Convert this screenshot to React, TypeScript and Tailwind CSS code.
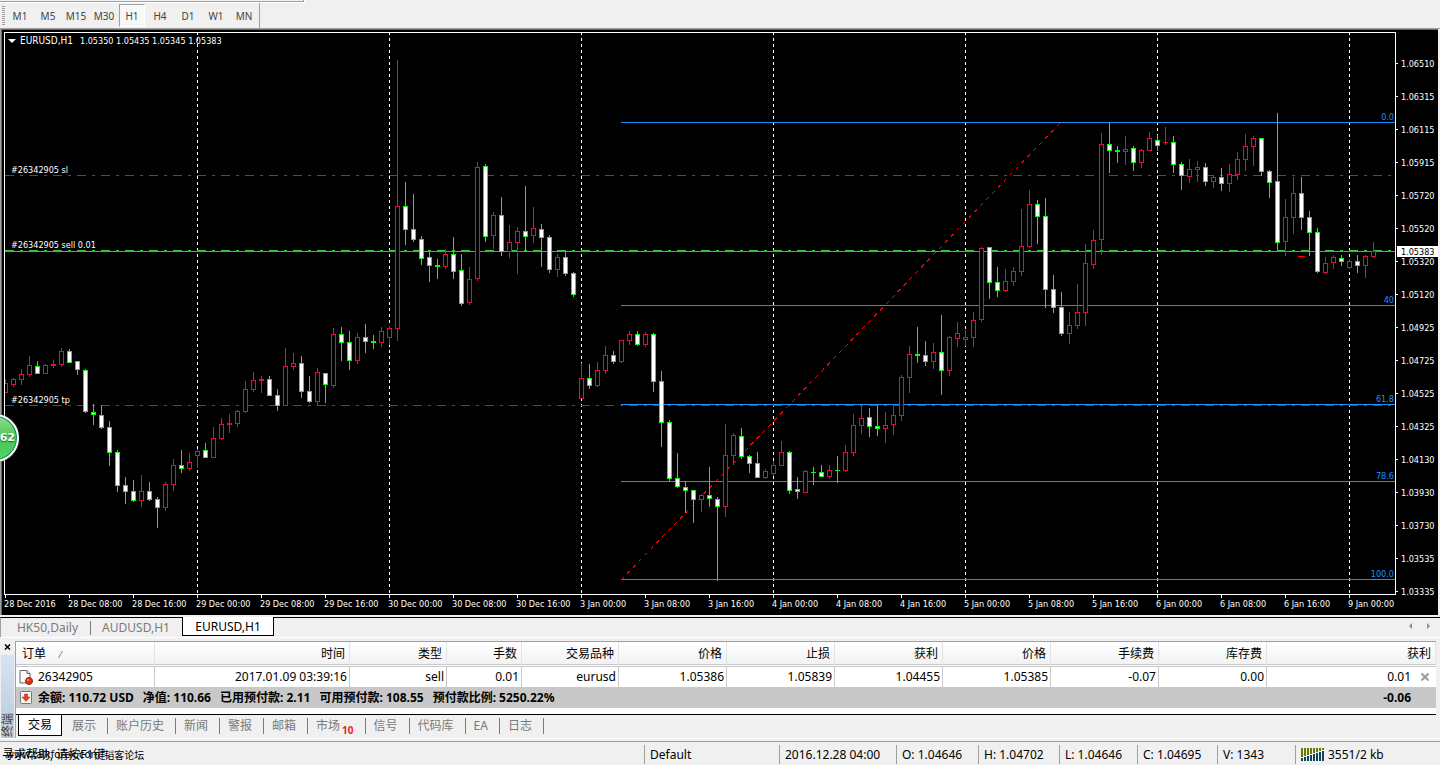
import type { ReactNode } from "react"

type Candle = ["r" | "g", number, number, number, number]

// direction, high, body top, body bottom, low (chart pixels, one candle every 8px)
const candles: Candle[] = [
    ["r", 379, 383, 392, 392], ["r", 378, 379, 384, 386], ["r", 369, 374, 379, 384], ["r", 356, 365, 374, 376],
    ["g", 361, 366, 373, 373], ["r", 364, 365, 373, 373], ["r", 360, 364, 365, 367], ["r", 348, 351, 364, 366],
    ["g", 349, 351, 362, 362], ["g", 361, 361, 369, 374], ["g", 369, 370, 411, 412], ["g", 404, 412, 414, 424],
    ["g", 405, 415, 427, 428], ["g", 421, 427, 452, 465], ["g", 450, 452, 485, 491], ["g", 477, 485, 491, 503],
    ["g", 480, 491, 500, 501], ["r", 475, 491, 500, 506], ["g", 482, 491, 499, 500], ["g", 497, 499, 507, 527],
    ["r", 482, 484, 507, 510], ["r", 459, 465, 484, 490], ["g", 450, 465, 468, 472], ["r", 453, 462, 468, 470],
    ["r", 449, 451, 455, 467], ["g", 443, 450, 457, 457], ["r", 427, 438, 457, 457], ["r", 418, 424, 438, 439],
    ["r", 414, 423, 424, 432], ["r", 410, 411, 423, 426], ["r", 381, 389, 411, 412], ["r", 372, 380, 389, 391],
    ["r", 376, 379, 380, 392], ["g", 376, 379, 395, 395], ["g", 389, 395, 405, 410], ["r", 348, 366, 405, 405],
    ["r", 353, 363, 366, 369], ["g", 356, 363, 391, 397], ["g", 376, 391, 401, 402], ["r", 368, 372, 401, 405],
    ["g", 373, 373, 384, 402], ["r", 328, 334, 385, 387], ["g", 327, 334, 342, 360], ["g", 331, 342, 360, 369],
    ["r", 333, 337, 360, 363], ["g", 324, 337, 341, 352], ["g", 335, 341, 342, 348], ["r", 327, 331, 342, 346],
    ["r", 326, 328, 337, 344], ["r", 60, 206, 328, 340], ["g", 182, 206, 229, 244], ["g", 194, 229, 239, 241],
    ["g", 236, 239, 258, 264], ["g", 251, 257, 265, 281], ["g", 259, 265, 266, 278], ["r", 249, 254, 266, 268],
    ["g", 237, 254, 271, 278], ["g", 254, 270, 303, 305], ["r", 267, 279, 302, 304], ["r", 162, 167, 278, 280],
    ["g", 164, 166, 236, 241], ["r", 212, 215, 235, 248], ["g", 197, 215, 251, 255], ["r", 225, 242, 251, 257],
    ["r", 227, 231, 242, 273], ["g", 186, 231, 236, 251], ["r", 207, 228, 235, 242], ["g", 224, 229, 237, 266],
    ["g", 235, 237, 269, 272], ["r", 254, 257, 269, 276], ["g", 252, 257, 273, 275], ["g", 272, 273, 294, 296],
    ["r", 363, 378, 398, 398], ["g", 364, 378, 385, 388], ["r", 362, 370, 385, 386], ["r", 346, 355, 370, 373],
    ["g", 351, 355, 361, 363], ["r", 340, 340, 361, 362], ["r", 331, 334, 340, 344], ["g", 331, 334, 344, 345],
    ["r", 332, 334, 344, 346], ["g", 333, 334, 381, 391], ["g", 371, 381, 422, 446], ["g", 420, 422, 478, 480],
    ["g", 453, 478, 486, 487], ["g", 481, 487, 490, 512], ["g", 490, 490, 499, 522], ["r", 494, 495, 499, 511],
    ["g", 467, 495, 498, 506], ["g", 497, 499, 506, 580], ["r", 424, 455, 506, 516], ["r", 433, 435, 455, 464],
    ["g", 428, 436, 456, 458], ["g", 455, 456, 463, 472], ["g", 452, 463, 477, 477], ["r", 469, 471, 477, 478],
    ["r", 461, 465, 473, 475], ["r", 441, 452, 465, 465], ["g", 451, 452, 490, 493], ["g", 477, 489, 491, 498],
    ["r", 470, 471, 492, 492], ["g", 467, 472, 472, 484], ["g", 465, 472, 476, 476], ["r", 465, 470, 476, 478],
    ["g", 456, 470, 470, 482], ["r", 445, 452, 470, 471], ["r", 414, 425, 452, 455], ["r", 405, 418, 425, 433],
    ["g", 408, 417, 426, 436], ["g", 405, 426, 428, 435], ["r", 412, 425, 428, 442], ["r", 404, 415, 424, 434],
    ["r", 375, 377, 415, 420], ["r", 346, 354, 377, 392], ["g", 327, 354, 355, 362], ["g", 341, 355, 361, 365],
    ["r", 343, 352, 361, 368], ["g", 315, 352, 370, 394], ["r", 336, 337, 370, 375], ["r", 322, 333, 338, 346],
    ["r", 330, 337, 339, 345], ["r", 312, 320, 337, 346], ["r", 247, 248, 319, 321], ["g", 247, 247, 282, 298],
    ["g", 267, 282, 290, 296], ["r", 269, 281, 290, 291], ["r", 267, 271, 281, 285], ["r", 209, 246, 271, 275],
    ["r", 190, 204, 246, 247], ["g", 200, 204, 216, 243], ["g", 198, 216, 289, 307], ["g", 275, 289, 307, 312],
    ["g", 292, 307, 333, 335], ["r", 312, 325, 333, 343], ["r", 284, 312, 325, 328], ["r", 244, 263, 312, 325],
    ["r", 230, 240, 264, 268], ["r", 133, 144, 239, 254], ["g", 123, 144, 150, 172], ["g", 146, 150, 151, 162],
    ["r", 136, 149, 151, 164], ["g", 146, 148, 162, 170], ["r", 149, 150, 162, 167], ["r", 132, 138, 150, 150],
    ["g", 135, 140, 145, 150], ["r", 127, 142, 142, 144], ["g", 136, 142, 164, 172], ["g", 162, 164, 175, 189],
    ["r", 159, 169, 176, 182], ["r", 161, 167, 169, 181], ["g", 163, 167, 181, 185], ["r", 175, 177, 181, 187],
    ["g", 168, 177, 183, 190], ["r", 164, 174, 183, 191], ["r", 152, 159, 174, 179], ["r", 134, 146, 159, 170],
    ["r", 136, 138, 146, 165], ["g", 138, 138, 171, 175], ["g", 170, 171, 182, 197], ["g", 113, 181, 242, 250],
    ["r", 199, 217, 241, 255], ["r", 177, 193, 217, 233], ["g", 177, 193, 217, 229], ["g", 211, 217, 232, 255],
    ["g", 228, 232, 271, 272], ["r", 257, 263, 272, 273], ["r", 255, 257, 262, 268], ["g", 255, 258, 261, 265],
    ["r", 259, 261, 267, 268], ["g", 255, 261, 265, 272], ["r", 255, 256, 265, 277], ["r", 242, 251, 256, 257],
]

const prices = [
    "1.06510", "1.06315", "1.06115", "1.05915", "1.05720", "1.05520", "1.05320", "1.05120", "1.04925",
    "1.04725", "1.04525", "1.04325", "1.04130", "1.03930", "1.03730", "1.03535", "1.03335",
]

const times = [
    "28 Dec 2016", "28 Dec 08:00", "28 Dec 16:00", "29 Dec 00:00", "29 Dec 08:00", "29 Dec 16:00",
    "30 Dec 00:00", "30 Dec 08:00", "30 Dec 16:00", "3 Jan 00:00", "3 Jan 08:00", "3 Jan 16:00",
    "4 Jan 00:00", "4 Jan 08:00", "4 Jan 16:00", "5 Jan 00:00", "5 Jan 08:00", "5 Jan 16:00",
    "6 Jan 00:00", "6 Jan 08:00", "6 Jan 16:00", "9 Jan 00:00",
]

const dayLines = [197, 389, 581, 773, 965, 1157, 1349]

const fibLevels = [
    { y: 122, label: "0.0" },
    { y: 305, label: "40" },
    { y: 404, label: "61.8" },
    { y: 481, label: "78.6" },
    { y: 579, label: "100.0" },
]

const orderLines = [
    { y: 175, label: "#26342905 sl", color: "#e60f0f" },
    { y: 250, label: "#26342905 sell 0.01", color: "#32cd32" },
    { y: 405, label: "#26342905 tp", color: "#e60f0f" },
]

const periods = ["M1", "M5", "M15", "M30", "H1", "H4", "D1", "W1", "MN"]

const columns = [
    { title: "订单", width: "w-[139px]" },
    { title: "时间", width: "w-[195px]" },
    { title: "类型", width: "w-[97px]" },
    { title: "手数", width: "w-[75px]" },
    { title: "交易品种", width: "w-[97px]" },
    { title: "价格", width: "w-[108px]" },
    { title: "止损", width: "w-[108px]" },
    { title: "获利", width: "w-[108px]" },
    { title: "价格", width: "w-[108px]" },
    { title: "手续费", width: "w-[108px]" },
    { title: "库存费", width: "w-[108px]" },
    { title: "获利", width: "" },
]

const order = ["2017.01.09 03:39:16", "sell", "0.01", "eurusd", "1.05386", "1.05839", "1.04455", "1.05385", "-0.07", "0.00"]

const summary = ["余额: 110.72 USD", "净值: 110.66", "已用预付款: 2.11", "可用预付款: 108.55", "预付款比例: 5250.22%"]

const terminalTabs = ["展示", "账户历史", "新闻", "警报", "邮箱", "市场", "信号", "代码库", "EA", "日志"]

const CandleShape = ({ candle, x }: { candle: Candle, x: number }) => {
    const [dir, high, top, bottom, low] = candle
    const color = dir === "r" ? "#dc143c" : "#00ff00"
    const height = bottom - top + 1
    return (
        <g>
            <rect x={x} y={high} width={1} height={low - high + 1} fill={color} />
            <rect x={x - 2} y={top} width={5} height={height} fill={color} />
            {height > 2 && (
                <rect x={x - 1} y={top + 1} width={3} height={height - 2} fill={dir === "r" ? "#000" : "#fff"} />
            )}
        </g>
    )
}

const Chart = () => (
    <svg
        viewBox="2 30 1436 585"
        className="block w-full bg-black font-['DejaVu_Sans_Condensed','DejaVu_Sans',sans-serif] text-[9px]"
        fill="#fff"
        role="img"
        aria-label="EURUSD,H1"
    >
        <g shapeRendering="crispEdges">
            {dayLines.map((x) => (
                <line key={x} x1={x + 0.5} x2={x + 0.5} y1={32} y2={594} stroke="#fff" strokeDasharray="3 3" />
            ))}
            <rect x={5} y={251} width={1390} height={1} fill="#778899" />
            {orderLines.map(({ y, color }) => (
                <line key={y} x1={5} x2={1391} y1={y + 0.5} y2={y + 0.5} stroke={color} strokeDasharray="9 6 3 6" />
            ))}
            {fibLevels.map(({ y }) => (
                <rect key={y} x={621} y={y} width={774} height={1} fill="#1e90ff" />
            ))}
            <line x1={621} y1={580} x2={1061} y2={122} stroke="#ff0000" strokeDasharray="4 4.5" />
            <svg x={5} y={33} width={1390} height={561} viewBox="5 33 1390 561">
                {candles.map((candle, i) => (
                    <CandleShape key={i} candle={candle} x={5 + i * 8} />
                ))}
            </svg>
            <rect x={1298} y={256} width={7} height={1} fill="#ff0000" />
            <rect x={4.5} y={32.5} width={1391} height={562} fill="none" stroke="#fff" />
            {prices.map((price, i) => (
                <rect key={price} x={1396} y={63 + i * 33} width={2} height={1} />
            ))}
            {times.map((time, i) => (
                <rect key={time} x={5 + i * 64} y={595} width={1} height={3} />
            ))}
            <rect x={1397} y={246} width={41} height={11} />
        </g>

        <path d="M8 39h8l-4 4z" />
        <text x={20} y={44} className="text-[10px]">EURUSD,H1</text>
        <text x={80} y={44}>1.05350 1.05435 1.05345 1.05383</text>
        {orderLines.map(({ y, label }) => (
            <text key={y} x={11} y={y - 2}>{label}</text>
        ))}
        {fibLevels.map(({ y, label }) => (
            <text key={y} x={1394} y={y - 2} textAnchor="end" fill="#1e90ff">{label}</text>
        ))}
        {prices.map((price, i) => (
            <text key={price} x={1401} y={67 + i * 33}>{price}</text>
        ))}
        <text x={1401} y={255} fill="#000">1.05383</text>
        {times.map((time, i) => (
            <text key={time} x={4 + i * 64} y={607}>{time}</text>
        ))}
    </svg>
)

const OrderIcon = () => (
    <svg width="14" height="16" viewBox="0 0 14 16" className="shrink-0" aria-hidden="true">
        <path d="M1 1.5h7l3 3v9.5H1z" fill="#fafafa" stroke="#666" />
        <path d="M8 1.5v3h3" fill="#ddd" stroke="#666" />
        <circle cx="10" cy="12" r="3.5" fill="#d8350f" stroke="#a32608" />
        <circle cx="9" cy="11" r="1" fill="#ff9a78" />
    </svg>
)

const BalanceIcon = () => (
    <svg width="14" height="15" viewBox="0 0 14 15" className="shrink-0" aria-hidden="true">
        <rect x="1.5" y="1.5" width="11" height="12" rx="1" fill="#f6f6f6" stroke="#777" />
        <path d="M5.5 4h3v3h2.5l-4 4.500-4-4.500h2.500z" fill="#e2401a" stroke="#b02c0c" strokeWidth="0.5" />
    </svg>
)

const TrafficIcon = () => (
    <svg width="23" height="13" viewBox="0 0 23 13" shapeRendering="crispEdges" aria-hidden="true">
        {[10, 9, 8, 7, 6, 5, 4, 3].map((h, i) => (
            <g key={h}>
                <rect x={i * 3} y={0} width={2} height={h - 1} fill="#667c00" />
                <rect x={i * 3} y={h} width={2} height={13 - h} fill="#0b4562" />
            </g>
        ))}
    </svg>
)

const StatusCell = ({ width, children }: { width: string, children: ReactNode }) => (
    <div className={`flex items-center gap-1 h-[19px] border-l border-[#a0a0a0] pl-[5px] whitespace-nowrap ${width}`}>
        {children}
    </div>
)

export default function App() {
    return (
        <div className="min-h-screen bg-[#f0f0f0] font-['Noto_Sans','Noto_Sans_CJK_SC',sans-serif] text-xs leading-4 text-black">
            <header className="flex flex-col h-7">
                <div className="w-[305px] h-[3px] border-b border-r border-white">
                    <div className="h-[2px] border-b border-r border-[#a0a0a0]" />
                </div>
                <div className="flex flex-1 w-[260px] border-r border-[#a0a0a0] pl-[2px] pt-px">
                    <div className="w-[3px] h-5 mt-[2px] mr-px bg-[repeating-linear-gradient(#a0a0a0_0_1px,#f0f0f0_1px_2px)]" />
                    {periods.map((period) => (
                        <button
                            key={period}
                            type="button"
                            aria-pressed={period === "H1"}
                            className={`h-[23px] text-center text-[10px] text-[#444] ${period === "H1" ? "w-[26px] mx-px border border-t-[#a0a0a0] border-l-[#a0a0a0] border-r-white border-b-white bg-[#f8f8f8]" : "w-7"}`}
                        >
                            {period}
                        </button>
                    ))}
                </div>
            </header>

            <main className="relative border-t border-l border-[#a0a0a0]">
                <div className="border-t border-l border-[#696969] mr-[2px]">
                    <Chart />
                </div>
                <div className="absolute top-[385px] -left-[30px] w-12 h-12 rounded-full border-2 border-white bg-[#178a5a] p-px shadow-[0_0_2px_#555]">
                    <div className="flex items-center justify-end w-full h-full rounded-full bg-linear-to-b from-[#8fdc8f] via-[#45c553] to-[#58d266] pr-px font-['DejaVu_Sans',sans-serif] text-[11px] font-bold text-white [text-shadow:0_1px_1px_#1d6b2b]">
                        62
                    </div>
                </div>
            </main>

            <nav className="flex h-[23px] pt-[2px] border-b border-white text-[#7a7a7a]">
                <div className="flex w-[182px] border-t border-l border-t-black border-l-[#a0a0a0]">
                    <button type="button" className="w-[89px] pl-1 pt-px text-center">HK50,Daily</button>
                    <span className="w-px h-[14px] mt-[3px] bg-[#7a7a7a]" />
                    <button type="button" className="w-[90px] pt-px text-center">AUDUSD,H1</button>
                </div>
                <button type="button" className="w-[92px] h-[19px] border border-t-0 border-black bg-white pt-[2px] text-center text-black">EURUSD,H1</button>
                <div className="flex flex-1 items-center justify-end gap-[15px] border-t border-black pr-[9px] pb-[3px]">
                    <button type="button" aria-label="Scroll left">
                        <svg width="4" height="8" viewBox="0 0 4 8"><path d="M4 1v6L1 4z" fill="#8c8c8c" /></svg>
                    </button>
                    <button type="button" aria-label="Scroll right">
                        <svg width="4" height="8" viewBox="0 0 4 8"><path d="M0 1v6l3-3z" fill="#8c8c8c" /></svg>
                    </button>
                </div>
            </nav>

            <section className="flex pt-[3px] pr-1 border-b border-white">
                <aside className="flex flex-col w-[15px] pl-px pr-px">
                    <button type="button" aria-label="Close" className="flex justify-center pt-[3px] h-[14px]">
                        <svg width="7" height="6" viewBox="0 0 7 6"><path d="M1 0.500l5 5M6 0.500l-5 5" stroke="#000" strokeWidth="1.500" /></svg>
                    </button>
                    <div className="flex flex-1 items-end justify-center bg-linear-to-b from-[#d6e4f2] to-[#b9c9d9] pb-px text-[#444]">
                        <span className="rotate-180 [writing-mode:vertical-rl] [text-orientation:sideways] leading-3">终端</span>
                    </div>
                </aside>
                <div className="flex-1 border-t border-l border-[#a0a0a0]">
                    <table className="w-full table-fixed border-separate border-spacing-0 bg-white text-right">
                        <thead>
                            <tr>
                                {columns.map(({ title, width }, i) => (
                                    <th
                                        key={i}
                                        scope="col"
                                        className={`h-[25px] border-b-[3px] border-double border-b-[#c8c8c8] border-r border-r-[#e2e4e6] bg-linear-to-b from-white to-[#f1f2f4] pt-[2px] pb-0 pr-1 pl-1.5 font-normal ${width} ${i === 0 ? "text-left" : ""}`}
                                    >
                                        {title}
                                        {i === 0 && (
                                            <svg width="6" height="7" viewBox="0 0 6 7" className="inline ml-3"><path d="M0.500 7l4-7" stroke="#888" fill="none" /></svg>
                                        )}
                                    </th>
                                ))}
                            </tr>
                        </thead>
                        <tbody>
                            <tr>
                                <td className="h-5 border-r border-[#c8c8c8] py-0 pl-[3px]">
                                    <div className="flex items-center gap-[5px]">
                                        <OrderIcon />
                                        26342905
                                    </div>
                                </td>
                                {order.map((value, i) => (
                                    <td key={i} className="border-r border-[#c8c8c8] py-0 pr-[2px]">{value}</td>
                                ))}
                                <td className="py-0">
                                    <div className="flex items-center justify-end gap-[10px] pr-[7px]">
                                        0.01
                                        <button type="button" aria-label="Close order">
                                            <svg width="8" height="8" viewBox="0 0 8 8"><path d="M0.500 0.500l7 7M7.500 0.500l-7 7" stroke="#999" strokeWidth="2" /></svg>
                                        </button>
                                    </div>
                                </td>
                            </tr>
                            <tr className="bg-[#c8c8c8] font-bold">
                                <td colSpan={11} className="h-[21px] py-0 pl-[3px]">
                                    <div className="flex items-center whitespace-nowrap">
                                        <BalanceIcon />
                                        <span className="flex gap-[9px] ml-[5px]">
                                            {summary.map((item) => <span key={item}>{item}</span>)}
                                        </span>
                                    </div>
                                </td>
                                <td className="py-0 pr-[25px]">-0.06</td>
                            </tr>
                        </tbody>
                    </table>
                    <div className="h-[6px] bg-white" />
                    <div className="flex h-6 border-t border-black text-[#7a7a7a]">
                        <button type="button" className="w-11 h-[21px] ml-[2px] border border-t-0 border-black bg-white text-center text-black">交易</button>
                        {terminalTabs.map((tab, i) => (
                            <div key={tab} className="flex">
                                <button type="button" className={`flex h-[21px] items-center pr-[11px] ${i === 0 ? "pl-[10px]" : "pl-2"}`}>
                                    {tab}
                                    {tab === "市场" && <span className="mt-2 ml-[2px] text-[10px] font-bold text-[#f01e1e]">10</span>}
                                </button>
                                <span className="w-px h-4 mt-[3px] bg-[#7a7a7a]" />
                            </div>
                        ))}
                    </div>
                </div>
            </section>

            <footer className="relative flex h-[26px] mt-[2px] items-center border-t border-[#a0a0a0] overflow-hidden">
                <div className="flex-1 pl-[2px] whitespace-nowrap">寻求帮助, 请按F1键</div>
                <div className="absolute left-[6px] top-[5px] flex items-center gap-1 whitespace-nowrap text-[10px]">
                    <span className="font-['DejaVu_Sans_Condensed',sans-serif] text-[11px]">www.talkforex.com</span>
                    <span>韬客论坛</span>
                </div>
                <StatusCell width="w-[135px]">Default</StatusCell>
                <StatusCell width="w-[117px]">2016.12.28 04:00</StatusCell>
                <StatusCell width="w-[82px]">O: 1.04646</StatusCell>
                <StatusCell width="w-[81px]">H: 1.04702</StatusCell>
                <StatusCell width="w-[78px]">L: 1.04646</StatusCell>
                <StatusCell width="w-[80px]">C: 1.04695</StatusCell>
                <StatusCell width="w-[78px]">V: 1343</StatusCell>
                <StatusCell width="w-[145px]">
                    <TrafficIcon />
                    3551/2 kb
                </StatusCell>
            </footer>
        </div>
    )
}
